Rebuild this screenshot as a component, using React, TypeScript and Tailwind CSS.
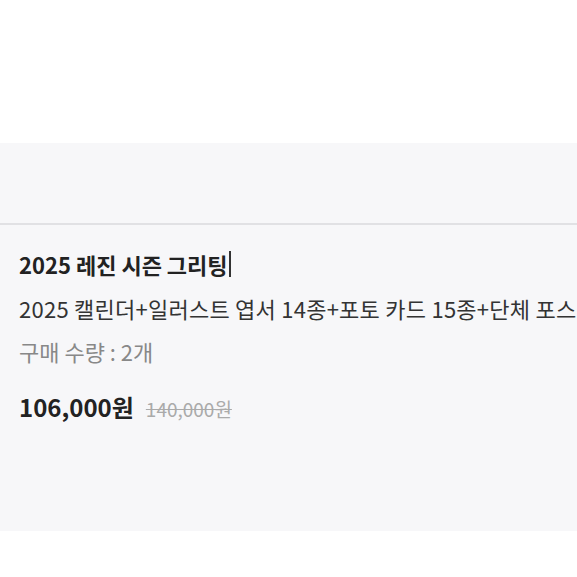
export default function App() {
  return (
    <div className="w-[577px] h-[577px] bg-white overflow-hidden" style={{ fontFamily: '"Noto Sans CJK KR", "Noto Sans", sans-serif' }}>
      <div className="h-[143px] bg-white" />
      <div className="bg-[#f7f7f9]">
        <div className="h-[80px]" />
        <div className="h-[2px] bg-[#e1e1e4]" />
        <div className="pl-[19px] pt-[23px] h-[306px] whitespace-nowrap overflow-hidden">
          <div className="flex items-center h-[32px]">
            <span className="text-[22px] font-bold text-[#222] leading-[32px]">2025 레진 시즌 그리팅</span>
            <span className="ml-[1px] w-[2px] h-[26px] bg-[#333]" />
          </div>
          <div className="mt-[12px] text-[22px] text-[#333] leading-[32px] tracking-[0.25px]">
            2025 캘린더+일러스트 엽서 14종+포토 카드 15종+단체 포스터
          </div>
          <div className="mt-[11px] text-[22px] text-[#888] leading-[32px]">구매 수량 : 2개</div>
          <div className="mt-[24px] flex items-baseline gap-[12px]">
            <span className="text-[24px] font-semibold text-[#222] leading-[32px]">106,000원</span>
            <span className="text-[19px] text-[#aaa] line-through">140,000원</span>
          </div>
        </div>
      </div>
    </div>
  );
}
